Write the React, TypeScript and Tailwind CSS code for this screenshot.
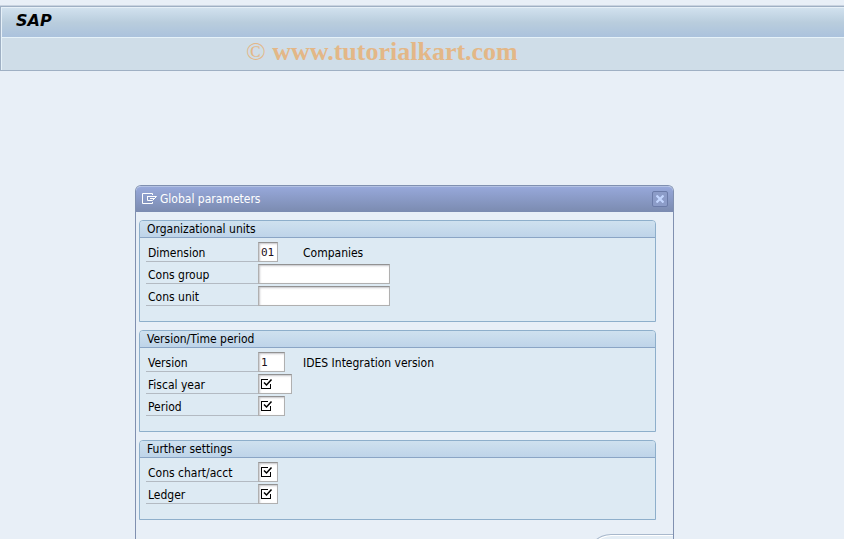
import React, { useState } from 'react';

type Feld = {
  id: string;
  label: string;
  value: string;
  width: string;
  required?: boolean;
  text?: string;
};

type Gruppe = {
  title: string;
  felder: Feld[];
};

const gruppen: Gruppe[] = [
  {
    title: 'Organizational units',
    felder: [
      { id: 'dimension', label: 'Dimension', value: '01', width: 'w-5', text: 'Companies' },
      { id: 'cons-group', label: 'Cons group', value: '', width: 'w-[132px]' },
      { id: 'cons-unit', label: 'Cons unit', value: '', width: 'w-[132px]' },
    ],
  },
  {
    title: 'Version/Time period',
    felder: [
      { id: 'version', label: 'Version', value: '1', width: 'w-[27px]', text: 'IDES Integration version' },
      { id: 'fiscal-year', label: 'Fiscal year', value: '', width: 'w-[34px]', required: true },
      { id: 'period', label: 'Period', value: '', width: 'w-[27px]', required: true },
    ],
  },
  {
    title: 'Further settings',
    felder: [
      { id: 'cons-chart', label: 'Cons chart/acct', value: '', width: 'w-5', required: true },
      { id: 'ledger', label: 'Ledger', value: '', width: 'w-5', required: true },
    ],
  },
];

const RequiredIcon = () => (
  <svg
    className="pointer-events-none absolute top-1 left-[3px] h-3 w-3"
    aria-hidden="true"
    viewBox="0 0 12 12"
    fill="none"
    stroke="#000">
    <path d="M7 1.5H0.5V10.5H9.5V6" shapeRendering="crispEdges" />
    <path d="M3 4.5L5.5 7L10.5 1.5" strokeWidth="1.5" />
  </svg>
);

const DialogIcon = () => (
  <svg
    className="h-3 w-4"
    aria-hidden="true"
    viewBox="0 0 16 12"
    fill="none"
    stroke="#fff">
    <path d="M10.5 2V0.5H0.5V10.5H10.5V9" />
    <path d="M5 3.5H14.5L10.5 7.5H5.5V3.5M8 5.5H12" />
  </svg>
);

const Eingabe = ({ feld }: { feld: Feld }) => {
  const [value, setValue] = useState(feld.value);

  return (
    <div className="flex h-5">
      <label
        htmlFor={feld.id}
        className="w-28 border-b border-[#b3bac2] pl-0.5 leading-[22px] whitespace-nowrap">
        {feld.label}
      </label>
      <div className={`relative h-5 ${feld.width}`}>
        <input
          id={feld.id}
          type="text"
          required={feld.required}
          value={value}
          onChange={(e) => setValue(e.target.value)}
          className="block h-5 w-full border border-[#b0b0b0] border-t-[#929292] bg-white pl-0.5 font-['DejaVu_Sans_Mono','Liberation_Mono',monospace] text-[11px] text-[#1c1020] shadow-[inset_1px_1px_2px_#c4c4c8] outline-none"
        />
        {feld.required && value === '' && <RequiredIcon />}
      </div>
      {feld.text && (
        <span
          className={
            feld.width === 'w-5' ? 'ml-[25px] leading-[22px]' : 'ml-[18px] leading-[22px]'
          }>
          {feld.text}
        </span>
      )}
    </div>
  );
};

const App = () => {
  const [open, setOpen] = useState(true);

  return (
    <div className="flex h-screen flex-col overflow-hidden bg-[#e8eff7] font-['DejaVu_Sans_Condensed','Noto_Sans',sans-serif] text-[12px] text-black">
      {/* header */}
      <header className="mt-[5px] border-t border-[#c9d3e0]">
        <div className="border border-r-0 border-[#9fb0c4]">
          <div className="flex h-[30px] items-center border-t border-l border-[#e6f0f8] bg-linear-to-b from-[#d1e1ee] via-[#b9cddd] to-[#abc2dd] pb-1 pl-3.5">
            <h1 className="font-['DejaVu_Sans',sans-serif] text-[16px] leading-5 font-bold italic">
              SAP
            </h1>
          </div>
          <div className="flex h-[33px] items-center border-t border-l border-[#e6f2f9] bg-[#cfdde8] pb-1 pl-[244px]">
            <span className="font-['Liberation_Serif',serif] text-[26px] leading-7 text-[#e3b787]">
              © <b>www.tutorialkart.com</b>
            </span>
          </div>
        </div>
      </header>

      {/* dialog */}
      <main className="flex flex-1 pt-[114px] pr-[170px] pl-[135px]">
        {open && (
          <section
            role="dialog"
            aria-labelledby="dialog-title"
            className="flex flex-1 flex-col rounded-t-md border border-b-0 border-[#8090b0]">
            <div className="flex h-[26px] shrink-0 items-center rounded-t-[5px] border-t border-[#b4c2e4] bg-linear-to-b from-[#97a8da] to-[#7b8bb0] pr-[5px] pb-0.5 pl-1.5">
              <DialogIcon />
              <h2 id="dialog-title" className="ml-0.5 flex-1 text-[12px] text-white">
                Global parameters
              </h2>
              <button
                type="button"
                aria-label="Close"
                onClick={() => setOpen(false)}
                className="flex h-4 w-4 items-center justify-center rounded-xs border border-[#6b7ba8] bg-[#8c9cc8]">
                <svg
                  className="h-2 w-2"
                  viewBox="0 0 8 8"
                  fill="none"
                  stroke="#c3d6ff"
                  strokeWidth="2.2">
                  <path d="M0.5 0.5L7.5 7.5M7.5 0.5L0.5 7.5" />
                </svg>
              </button>
            </div>

            <form className="flex flex-col gap-2 pt-2 pr-[17px] pl-[3px]">
              {gruppen.map((gruppe) => (
                <fieldset
                  key={gruppe.title}
                  aria-label={gruppe.title}
                  className="rounded-t-sm border border-[#8eafcb] bg-[#ddeaf3]">
                  <div className="h-[17px] rounded-t-[3px] border-b border-[#8aa5c5] bg-linear-to-b from-[#cfe1ef] to-[#bed4e9] pl-[7px] leading-4">
                    {gruppe.title}
                  </div>
                  <div className="flex flex-col gap-0.5 pt-1 pb-[15px] pl-1.5">
                    {gruppe.felder.map((feld) => (
                      <Eingabe key={feld.id} feld={feld} />
                    ))}
                  </div>
                </fieldset>
              ))}
            </form>

            {/* button bar */}
            <div className="mt-3.5 flex flex-1 justify-end overflow-hidden">
              <div className="h-8 w-[16%] min-w-[84px] shrink-0 rounded-tl-[24px] border-t border-l border-[#a8b8cc] bg-[#e4edf5] shadow-[inset_1px_1px_0_#fff]" />
            </div>
          </section>
        )}
      </main>
    </div>
  );
};

export default App;
